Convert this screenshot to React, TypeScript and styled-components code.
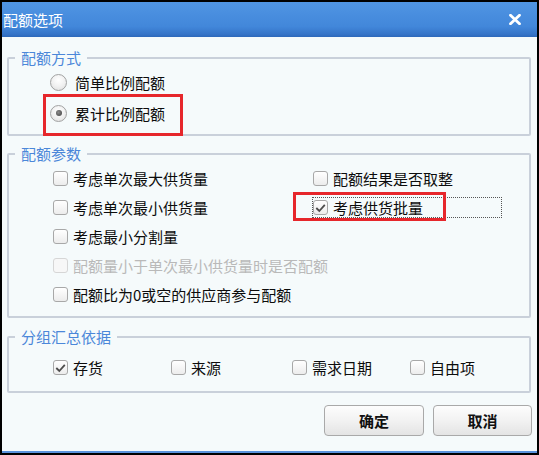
import React from 'react';
import styled, { createGlobalStyle } from 'styled-components';

const Global = createGlobalStyle`
  html, body { margin: 0; padding: 0; background: #000; }
  body { font-family: "Noto Sans CJK SC", "Noto Sans", sans-serif; }
  * { box-sizing: border-box; }
`;

const Frame = styled.div`
  width: 539px;
  height: 455px;
  padding: 2px;
  background: #000;
`;

const Dialog = styled.div`
  height: 451px;
  background: #f5fafb;
  border-bottom: 2px solid #5a92dc;
  display: flex;
  flex-direction: column;
`;

const TitleBar = styled.div`
  height: 35px;
  flex: none;
  display: flex;
  align-items: center;
  justify-content: space-between;
  padding: 0 16px 0 1px;
  background: linear-gradient(#5095e3, #4287da 70%, #3574c8 92%, #2d68ba);
  color: #fff;
  font-size: 15px;
  line-height: 17px;
`;

const CloseIcon = () => (
  <svg width="12" height="11" viewBox="0 0 12 11">
    <path d="M1.5 1.2 L10.5 9.8 M10.5 1.2 L1.5 9.8" stroke="#fff" strokeWidth="2.8" strokeLinecap="round" />
  </svg>
);

const Body = styled.div`
  flex: 1;
  display: flex;
  flex-direction: column;
  padding: 12px 5px 0 5px;
`;

const Group = styled.fieldset<{ $mt: number; $pt: number; $pb: number }>`
  margin: ${p => p.$mt}px 1px 0 0;
  padding: ${p => p.$pt}px 0 ${p => p.$pb}px 0;
  border: 2px solid #c9d0da;
  border-radius: 2px;
  min-width: 0;
`;

const Legend = styled.legend`
  margin-left: 6px;
  padding: 0 6px;
  font-size: 15px;
  line-height: 17px;
  color: #4b87d9;
`;

const RadioRow = styled.div<{ $mt?: number }>`
  position: relative;
  display: flex;
  align-items: center;
  gap: 8px;
  height: 22px;
  margin: ${p => p.$mt ?? 0}px 0 0 41px;
  width: fit-content;
  font-size: 15px;
  color: #0c0c0c;
`;

const RadioCircle = styled.span<{ $on?: boolean }>`
  width: 17px;
  height: 17px;
  border-radius: 50%;
  border: 1px solid #a2a2a2;
  background: radial-gradient(circle at 50% 35%, #ffffff 0%, #f1f1f1 50%, #dcdcdc 100%);
  display: flex;
  align-items: center;
  justify-content: center;
  &::after {
    content: '';
    display: ${p => (p.$on ? 'block' : 'none')};
    width: 6px;
    height: 6px;
    border-radius: 50%;
    background: radial-gradient(circle at 40% 40%, #8a8a8a, #3e3e3e);
  }
`;

const Annotation = styled.span<{ $l: number; $t: number; $w: number; $h: number }>`
  position: absolute;
  left: ${p => p.$l}px;
  top: ${p => p.$t}px;
  width: ${p => p.$w}px;
  height: ${p => p.$h}px;
  border: 3px solid #e6262b;
  pointer-events: none;
`;

const ParamGrid = styled.div`
  display: grid;
  grid-template-columns: 260px 1fr;
  grid-auto-rows: 29px;
  margin-left: 44px;
`;

const SummaryGrid = styled.div`
  display: grid;
  grid-template-columns: 118px 121px 118px 1fr;
  grid-auto-rows: 29px;
  margin-left: 44px;
`;

const Check = styled.label<{ $span?: boolean; $disabled?: boolean }>`
  display: flex;
  align-items: center;
  gap: 5px;
  font-size: 15px;
  line-height: 17px;
  white-space: nowrap;
  color: ${p => (p.$disabled ? '#b9b9b9' : '#0c0c0c')};
  grid-column: ${p => (p.$span ? '1 / -1' : 'auto')};
`;

const Box = styled.span<{ $disabled?: boolean }>`
  flex: none;
  width: 15px;
  height: 15px;
  border-radius: 3px;
  border: 1px solid ${p => (p.$disabled ? '#d6d6d6' : '#a8a8a8')};
  background: ${p => (p.$disabled ? '#f7f7f7' : 'linear-gradient(#ffffff, #ececec)')};
  display: flex;
  align-items: center;
  justify-content: center;
`;

const FocusCell = styled.div`
  position: relative;
  align-self: center;
  margin-left: -1px;
  width: 190px;
  height: 21px;
  border: 1px dotted #555;
  display: flex;
  align-items: center;
`;

const ButtonRow = styled.div`
  display: flex;
  justify-content: flex-end;
  gap: 9px;
  margin-top: 12px;
`;

const Button = styled.button<{ $w: number }>`
  width: ${p => p.$w}px;
  height: 31px;
  border: 1px solid #a9a9a9;
  border-radius: 4px;
  background: linear-gradient(#fdfdfd, #f2f2f2 50%, #e4e4e4);
  font-family: inherit;
  font-size: 15px;
  font-weight: 600;
  color: #111;
  padding: 0;
`;

const Tick = () => (
  <svg width="11" height="10" viewBox="0 0 11 10">
    <path d="M1.3 5 L4.3 8 L9.8 1.8" fill="none" stroke="#4c4c4c" strokeWidth="1.8" />
  </svg>
);

const CheckItem: React.FC<{ label: string; checked?: boolean; span?: boolean; disabled?: boolean }> = ({
  label,
  checked,
  span,
  disabled,
}) => (
  <Check $span={span} $disabled={disabled}>
    <Box $disabled={disabled}>{checked && <Tick />}</Box>
    {label}
  </Check>
);

export default function App() {
  return (
    <>
      <Global />
      <Frame>
        <Dialog>
          <TitleBar>
            <span>配额选项</span>
            <CloseIcon />
          </TitleBar>
          <Body>
            <Group $mt={0} $pt={5} $pb={10}>
              <Legend>配额方式</Legend>
              <RadioRow>
                <RadioCircle />
                简单比例配额
              </RadioRow>
              <RadioRow $mt={9}>
                <RadioCircle $on />
                累计比例配额
                <Annotation $l={-7} $t={-8} $w={140} $h={42} />
              </RadioRow>
            </Group>

            <Group $mt={9} $pt={2} $pb={7}>
              <Legend>配额参数</Legend>
              <ParamGrid>
                <CheckItem label="考虑单次最大供货量" />
                <CheckItem label="配额结果是否取整" />
                <CheckItem label="考虑单次最小供货量" />
                <FocusCell>
                  <CheckItem label="考虑供货批量" checked />
                  <Annotation $l={-20} $t={-6} $w={153} $h={29} />
                </FocusCell>
                <CheckItem label="考虑最小分割量" span />
                <CheckItem label="配额量小于单次最小供货量时是否配额" span disabled />
                <CheckItem label="配额比为0或空的供应商参与配额" span />
              </ParamGrid>
            </Group>

            <Group $mt={10} $pt={8} $pb={9}>
              <Legend>分组汇总依据</Legend>
              <SummaryGrid>
                <CheckItem label="存货" checked />
                <CheckItem label="来源" />
                <CheckItem label="需求日期" />
                <CheckItem label="自由项" />
              </SummaryGrid>
            </Group>

            <ButtonRow>
              <Button $w={100}>确定</Button>
              <Button $w={99}>取消</Button>
            </ButtonRow>
          </Body>
        </Dialog>
      </Frame>
    </>
  );
}
